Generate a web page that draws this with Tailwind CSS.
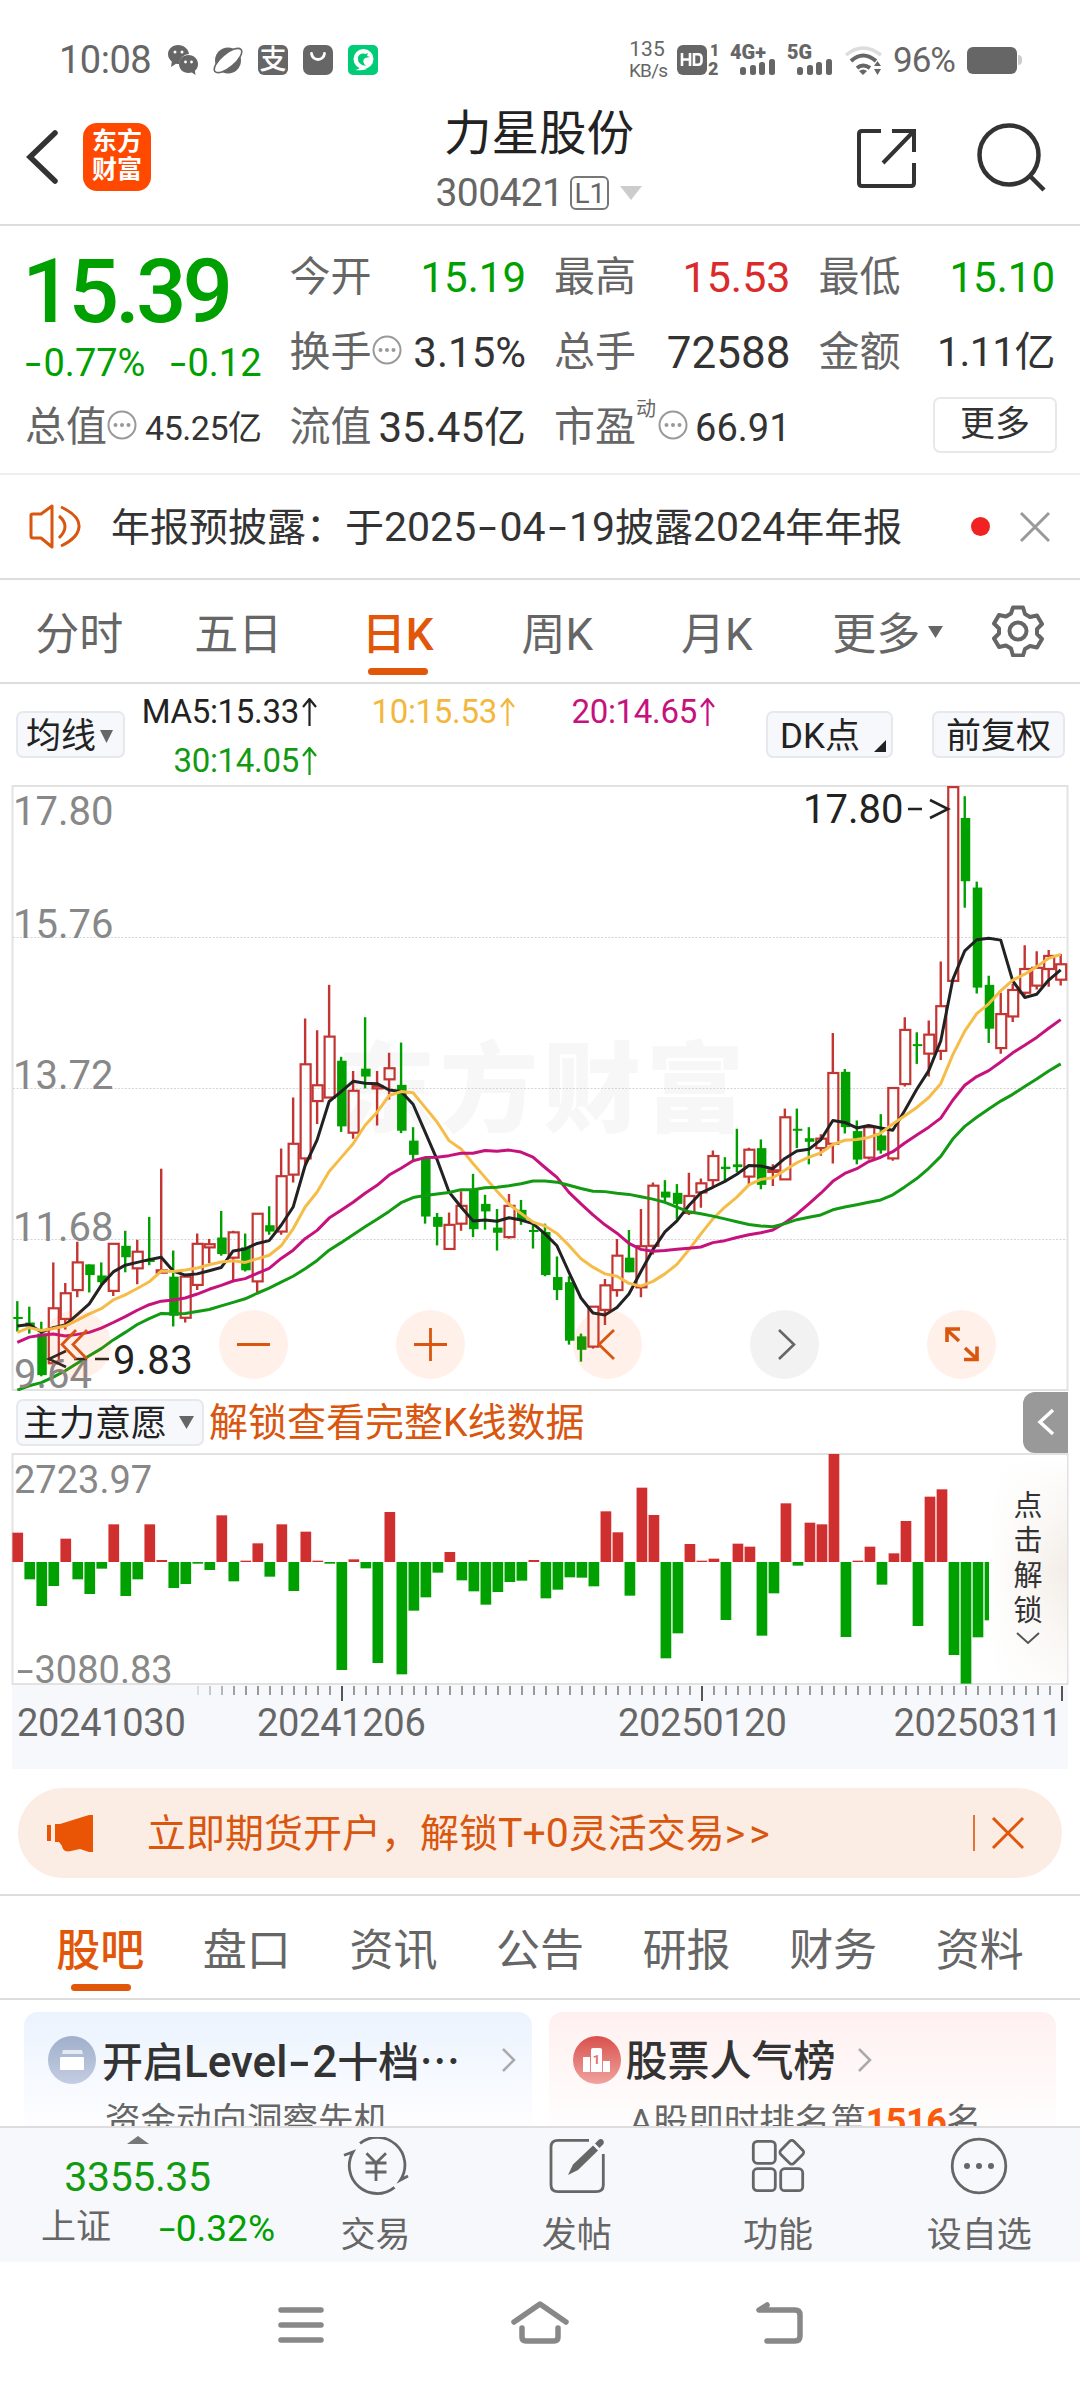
<!DOCTYPE html>
<html lang="zh-CN">
<head>
  <meta charset="UTF-8" />
  <meta name="viewport" content="width=device-width, initial-scale=1.0" />
  <title>力星股份 300421</title>
  <script src="https://cdn.jsdelivr.net/npm/@tailwindcss/browser@4"></script>
</head>
<body class="bg-white text-[#333] font-[Roboto,'Noto_Sans_CJK_SC',sans-serif] leading-none">
<div class="w-[1080px] h-[2388px] flex flex-col overflow-hidden whitespace-nowrap">

  <!-- Status bar -->
  <div class="h-[100px] pt-5 pl-[59px] pr-[57px] flex items-center justify-between text-[#666] shrink-0">
    <div class="flex items-center gap-[15px]">
      <span class="text-[38px] w-[94px] tracking-[-0.5px]">10:08</span>
      <svg class="w-[30px] h-[30px]" viewBox="0 0 30 30" fill="#666">
        <path d="M10 0C4.500 0 0 4 0 9.200c0 3 1.500 5.500 3.800 7.200L3 22l5-3.200c1 .2 2 .3 3 .2A10.500 10.500 0 0 1 21 9C20.500 4 16 0 10 0z"/>
        <path d="M20.500 10C15 10 11 14 11 19s4 9 9.500 9c1.200 0 2.300-.2 3.300-.5l3.700 2.500-.6-4.200c2-1.500 3.100-4 3.100-6.800 0-5-4-9-9.500-9z"/>
        <g fill="#fff"><circle cx="7" cy="7" r="1.500"/><circle cx="14" cy="7" r="1.500"/><circle cx="17.500" cy="17" r="1.400"/><circle cx="23.500" cy="17" r="1.400"/></g>
      </svg>
      <svg class="w-[30px] h-[30px]" viewBox="0 0 30 30">
        <circle cx="15" cy="15.500" r="13" fill="#666"/>
        <ellipse cx="15" cy="15.500" rx="17" ry="6.800" fill="#fff" stroke="#666" stroke-width="1.600" transform="rotate(-40 15 15.500)"/>
      </svg>
      <div class="size-[30px] rounded-[6px] bg-[#666] text-white text-[27px] font-medium flex items-center justify-center">支</div>
      <svg class="w-[30px] h-[30px]" viewBox="0 0 30 30"><rect width="30" height="30" rx="7" fill="#666"/><path d="M8.500 8.500c1 8 12 8 13 0" fill="none" stroke="#fff" stroke-width="2.800" stroke-linecap="round"/></svg>
      <svg class="w-[30px] h-[30px]" viewBox="0 0 30 30"><rect width="30" height="30" rx="5" fill="#0c7"/><circle cx="15.500" cy="14" r="10" fill="#fff"/><path d="M7 25q5-1 6-4l6 3q-5 2-12 1z" fill="#fff"/><path d="M10 12q2-5 8-3l2-1-1 3 3 1-5 1q-4 3 1 8-9-1-8-9z" fill="#0c7"/></svg>
    </div>
    <div class="flex items-center">
      <div class="text-center text-[21px] leading-[22px] w-[36px]"><div>135</div><div class="text-[19px] tracking-[-0.8px]">KB/s</div></div>
      <svg class="w-[206px] h-[34px] ml-[11px] overflow-visible" viewBox="0 0 206 34">
        <rect x="1" y="2" width="30" height="30" rx="6" fill="#666"/>
        <path d="M6 10v13M14 10v13M6 16.500h8M18 11.200h4q3.500 0 3.500 3.500v3.500q0 3.500-3.500 3.500h-4z" fill="none" stroke="#fff" stroke-width="2.600"/>
        <g fill="#666" font-family="Roboto" font-weight="900">
          <text x="34" y="13" font-size="16">1</text><text x="32" y="32" font-size="18">2</text>
          <text x="54" y="16" font-size="20" textLength="36" lengthAdjust="spacingAndGlyphs">4G+</text>
          <text x="111" y="16" font-size="20" textLength="25" lengthAdjust="spacingAndGlyphs">5G</text>
        </g>
        <g fill="#666">
          <rect x="64" y="24" width="6" height="8" rx="2.500"/><rect x="74" y="22" width="6" height="10" rx="2.500"/><rect x="83" y="19" width="6" height="13" rx="2.500"/><rect x="93" y="16" width="6" height="16" rx="2.500"/>
          <rect x="121" y="24" width="6" height="8" rx="2.500"/><rect x="131" y="22" width="6" height="10" rx="2.500"/><rect x="140" y="19" width="6" height="13" rx="2.500"/><rect x="150" y="16" width="6" height="16" rx="2.500"/>
        </g>
        <g fill="none" stroke="#666" stroke-width="4">
          <path d="M170 12Q187-2 205 12" stroke="#ddd" stroke-width="3.500"/>
          <path d="M175 18Q187 7 200 18M181 25Q187 20 194 25"/>
        </g>
        <path d="M183 28q4.500-3 8 0l-4 4zM198 23l3.500-5 3.500 5zM198 26l3.500 6 3.500-6z" fill="#666"/>
      </svg>
      <span class="text-[35px] w-[62px] ml-[11px] tracking-[-1px]">96%</span>
      <div class="w-[50px] h-[27px] bg-[#666] rounded-[6px] ml-[12px] mr-px"></div>
      <div class="w-[4px] h-[10px] bg-[#ccc] rounded-r mr-px"></div>
    </div>
  </div>

  <!-- Title bar -->
  <div class="h-[126px] border-b-2 border-[#ddd] flex items-center justify-between pl-[26px] pr-[32px] relative shrink-0">
    <div class="flex items-center gap-[24px] -mt-[10px]">
      <svg class="w-[33px] h-[56px]" viewBox="0 0 33 56" fill="none" stroke="#333" stroke-width="5.500" stroke-linecap="round"><path d="M29 4L4 28l25 24"/></svg>
      <div class="size-[68px] rounded-[14px] bg-[#ff4800] text-white text-[25px] leading-[28px] font-bold text-center pt-[5px]">东方<br>财富</div>
    </div>
    <div class="absolute left-[339px] w-[400px] top-[11px] text-center">
      <div class="text-[47.500px] text-[#222]">力星股份</div>
      <div class="flex items-center justify-center mt-[15px] text-[39px] text-[#666]">
        <span class="tracking-[-0.6px]">300421</span>
        <span class="border-2 border-[#777] rounded-[6px] text-[28px] w-[39px] h-[34px] leading-[31px] ml-[7px]">L1</span>
        <svg class="w-[22px] h-[14px] ml-[11px]" viewBox="0 0 22 14"><path d="M0 0h22L11 14z" fill="#ccc"/></svg>
      </div>
    </div>
    <div class="flex items-center gap-[60px] -mt-[8px]">
      <svg class="w-[60px] h-[60px]" viewBox="0 0 60 60" fill="none" stroke="#333" stroke-width="4"><path d="M25 3H6Q3 3 3 6v49q0 3 3 3h49q3 0 3-3V35M36 3h22v21M58 3L27 35"/></svg>
      <svg class="w-[72px] h-[70px]" viewBox="0 0 72 70" fill="none" stroke="#333" stroke-width="4.500"><circle cx="33" cy="32" r="29.500"/><path d="M53 52l15 15"/></svg>
    </div>
  </div>

  <!-- Quote -->
  <div class="h-[249px] border-b-2 border-[#eee] px-[25px] pt-[14px] grid grid-cols-4 gap-x-[28px] grid-rows-[75px_75px_75px] text-[41px] shrink-0">
    <div class="row-span-2 text-[#00a000]">
      <div class="text-[89px] font-medium tracking-[-4px] mt-[10px] leading-[84px] -ml-[3px]">15.39</div>
      <div class="flex justify-between text-[38px] mt-[10px]"><span><span class="inline-block scale-x-150 ml-[3px] mr-[5px]">-</span>0.77%</span><span><span class="inline-block scale-x-150 mr-[4px]">-</span>0.12</span></div>
    </div>
    <div class="flex items-center justify-between"><span class="text-[#666]">今开</span><span class="text-[#00a000] text-[42px]">15.19</span></div>
    <div class="flex items-center justify-between"><span class="text-[#666]">最高</span><span class="text-[#d92b2b] text-[43px]">15.53</span></div>
    <div class="flex items-center justify-between"><span class="text-[#666]">最低</span><span class="text-[#00a000] text-[42px]">15.10</span></div>

    <div class="flex items-center">
      <span class="text-[#666]">换手</span>
      <svg class="w-[30px] h-[30px] mb-[6px]" viewBox="0 0 30 30"><circle cx="15" cy="15" r="13.500" fill="none" stroke="#999" stroke-width="2"/><g fill="#999"><circle cx="8.500" cy="15" r="2"/><circle cx="15" cy="15" r="2"/><circle cx="21.500" cy="15" r="2"/></g></svg>
      <span class="ml-auto text-[42px]">3.15%</span>
    </div>
    <div class="flex items-center justify-between"><span class="text-[#666]">总手</span><span class="text-[44px]">72588</span></div>
    <div class="flex items-center justify-between"><span class="text-[#666]">金额</span><span class="tracking-[-0.6px]">1.11亿</span></div>

    <div class="flex items-center">
      <span class="text-[#666]">总值</span>
      <svg class="w-[30px] h-[30px] mb-[6px]" viewBox="0 0 30 30"><circle cx="15" cy="15" r="13.500" fill="none" stroke="#999" stroke-width="2"/><g fill="#999"><circle cx="8.500" cy="15" r="2"/><circle cx="15" cy="15" r="2"/><circle cx="21.500" cy="15" r="2"/></g></svg>
      <span class="ml-auto text-[34px] tracking-[-0.5px]">45.25亿</span>
    </div>
    <div class="flex items-center justify-between"><span class="text-[#666]">流值</span><span class="text-[42px]">35.45亿</span></div>
    <div class="flex items-center">
      <span class="text-[#666]">市盈</span><span class="text-[20px] text-[#666] self-start mt-[9px]">动</span>
      <svg class="w-[30px] h-[30px] mb-[6px] ml-[2px]" viewBox="0 0 30 30"><circle cx="15" cy="15" r="13.500" fill="none" stroke="#999" stroke-width="2"/><g fill="#999"><circle cx="8.500" cy="15" r="2"/><circle cx="15" cy="15" r="2"/><circle cx="21.500" cy="15" r="2"/></g></svg>
      <span class="ml-auto text-[38px]">66.91</span>
    </div>
    <div class="flex items-center justify-end"><span class="w-[124px] h-[56px] border-2 border-[#e8e8e8] rounded-[7px] text-[35px] flex items-center justify-center -mr-[2px] -mt-[6px]">更多</span></div>
  </div>

  <!-- Announcement -->
  <div class="h-[105px] border-b-2 border-[#ddd] flex items-center pl-[28px] pr-[29px] shrink-0">
    <svg class="w-[54px] h-[46px]" viewBox="0 0 54 46" fill="none" stroke="#d9560f" stroke-width="3"><path d="M3 11q0-1 2-1h8L24 2v41L13 34H5q-2 0-2-2z" stroke-linejoin="round"/><path d="M31 12q12 10 0 22M33 3q19 9 18 20t-18 19"/></svg>
    <span class="text-[39px] ml-[29px] pt-[2px]">年报预披露：于<span class="text-[41px]">2025<span class="inline-block scale-x-160 mx-[6px]">-</span>04<span class="inline-block scale-x-160 mx-[6px]">-</span>19</span>披露<span class="text-[41px]">2024</span>年年报</span>
    <span class="size-[19px] rounded-full bg-[#f02222] ml-auto"></span>
    <svg class="w-[32px] h-[32px] ml-[29px]" viewBox="0 0 32 32" stroke="#999" stroke-width="3"><path d="M2 2l28 28M30 2L2 30"/></svg>
  </div>

  <!-- Period tabs -->
  <div class="h-[104px] border-b-2 border-[#ddd] flex items-center text-[44px] text-[#666] shrink-0">
    <div class="w-[158.5px] text-center pt-[7px]">分时</div>
    <div class="w-[159.5px] text-center pt-[7px]">五日</div>
    <div class="w-[159.5px] h-full flex items-center justify-center relative text-[#e2560a] font-medium pt-[7px]">日K<div class="absolute left-[50px] bottom-[7px] w-[60px] h-[7px] rounded-full bg-[#e2560a]"></div></div>
    <div class="w-[159.5px] text-center pt-[7px]">周K</div>
    <div class="w-[159.5px] text-center pt-[7px]">月K</div>
    <div class="w-[159.5px] flex items-center justify-center relative pt-[7px]">更多<svg class="absolute left-[131px] top-[20px] w-[15px] h-[12px]" viewBox="0 0 15 12"><path d="M0 0h15L7.500 12z" fill="#666"/></svg></div>
    <svg class="w-[52px] h-[52px] mx-auto" viewBox="0 0 52 52" fill="none" stroke="#666" stroke-width="4" stroke-linejoin="round"><path d="M21 2.500h10l2 6.500 5 3 7-1.500 5 8.500-5 5v5l5 5-5 8.500-7-1.500-5 3-2 6.500H21L19 43.500l-5-3-7 1.500-5-8.500 5-5v-5l-5-5 5-8.500 7 1.500 5-3z"/><circle cx="26" cy="26" r="8.500"/></svg>
  </div>

  <!-- Moving averages -->
  <div class="h-[101px] flex pl-[16px] pr-[15px] text-[35px] text-[#222] shrink-0">
    <div class="w-[109px] h-[47px] mt-[27px] border-2 border-[#e6e8ee] bg-[#f7f8fb] rounded-[7px] flex items-center pl-[8px] pt-[3px]">均线<svg class="w-[13px] h-[13px] ml-[4px]" viewBox="0 0 13 13"><path d="M0 0h13L6.500 13z" fill="#666"/></svg></div>
    <div class="grid grid-cols-[192px_198px_200px] text-right text-[33px] leading-[49px] h-[98px] mt-[3px] tracking-[-0.3px]">
      <span>MA5:15.33<span class="ml-[3px] inline-block w-[15px] h-[28px] align-[-3px]"><svg viewBox="0 0 15 28" fill="none" stroke="#222" stroke-width="2.200"><path d="M7.500 28V1M1 9l6.500-8L14 9"/></svg></span></span>
      <span class="text-[#f3b73e]">10:15.53<span class="ml-[3px] inline-block w-[15px] h-[28px] align-[-3px]"><svg viewBox="0 0 15 28" fill="none" stroke="#f3b73e" stroke-width="2.200"><path d="M7.500 28V1M1 9l6.500-8L14 9"/></svg></span></span>
      <span class="text-[#c5127d]">20:14.65<span class="ml-[3px] inline-block w-[15px] h-[28px] align-[-3px]"><svg viewBox="0 0 15 28" fill="none" stroke="#c5127d" stroke-width="2.200"><path d="M7.500 28V1M1 9l6.500-8L14 9"/></svg></span></span>
      <span class="text-[#129a12]">30:14.05<span class="ml-[3px] inline-block w-[15px] h-[28px] align-[-3px]"><svg viewBox="0 0 15 28" fill="none" stroke="#129a12" stroke-width="2.200"><path d="M7.500 28V1M1 9l6.500-8L14 9"/></svg></span></span>
    </div>
    <div class="w-[127px] h-[47px] mt-[27px] ml-auto border-2 border-[#e6e8ee] bg-[#f7f8fb] rounded-[7px] flex items-center pl-[12px] pt-[3px] relative">DK点<svg class="absolute right-[5px] bottom-[4px] w-[12px] h-[12px]" viewBox="0 0 12 12"><path d="M12 0v12H0z" fill="#222"/></svg></div>
    <div class="w-[133px] h-[47px] mt-[27px] ml-[39px] border-2 border-[#e6e8ee] bg-[#f7f8fb] rounded-[7px] flex items-center justify-center pt-[3px]">前复权</div>
  </div>

  <!-- Candles -->
  <div class="relative h-[606px] shrink-0 text-[40px]">
    <div class="absolute left-[337px] top-[257px] text-[98px] tracking-[5px] font-black text-[#f7f7f7]">东方财富</div>
    <svg id="kline" class="absolute inset-0" width="1080" height="606" viewBox="0 0 1080 606" fill="none">
      <rect x="12.500" y="1" width="1055" height="604" stroke="#e2e2e2" stroke-width="2"/>
      <path d="M13 152.500h1054M13 303.500h1054M13 454.500h1054" stroke="#d5d5d5" stroke-dasharray="2 1.500"/>
    </svg>
    <div class="absolute left-[13px] top-[7px] text-[#888]">17.80</div>
    <div class="absolute left-[13px] top-[120px] text-[#888]">15.76</div>
    <div class="absolute left-[13px] top-[271px] text-[#888]">13.72</div>
    <div class="absolute left-[13px] top-[423px] text-[#888]">11.68</div>
    <div class="absolute left-[14px] top-[570px] text-[#888]">9.64</div>
    <div class="absolute left-[113px] top-[556px] text-[#222] tracking-[0.6px]">9.83</div>
    <div class="absolute left-[803px] top-[5px] text-[#222]">17.80</div>
    <svg class="absolute inset-0" width="1080" height="606" viewBox="0 0 1080 606" fill="none" stroke="#222" stroke-width="2.600">
      <path d="M908 24h14M930 15l18 9-18 9M66 566l-17 8 17 8M74 574h13M95 574h14"/>
      <g fill="#ff5c1a" fill-opacity=".09" stroke="none"><circle cx="76.500" cy="559.500" r="34.500"/><circle cx="253.500" cy="559.500" r="34.500"/><circle cx="430.500" cy="559.500" r="34.500"/><circle cx="607.500" cy="559.500" r="34.500"/><circle cx="961.500" cy="559.500" r="34.500"/></g>
      <circle cx="784.500" cy="559.500" r="34.500" fill="#f2f2f2" stroke="none"/>
      <g stroke="#d9560f" stroke-width="2.800"><path d="M76 545l-14 14.500 14 14.500M87 545l-14 14.500 14 14.500M237 559.500h33M414 559.500h33M430.500 543v33M614 545l-15 14.500 15 14.500"/><path d="M947 557v-13h13M946 544l13 12M965 563l13 12M964 574.500h13v-13" stroke-width="3.600"/></g>
      <path d="M779 545l15 14.500-15 14.500" stroke="#666"/>
    </svg>
  </div>

  <!-- Indicator header -->
  <div class="h-[62px] flex items-center pl-[16px] pr-[12px] shrink-0">
    <div class="w-[188px] h-[47px] border-2 border-[#e6e8ee] bg-[#f7f8fb] rounded-[7px] flex items-center pl-[5px] pt-[3px] text-[36px] text-[#222]">主力意愿<svg class="w-[15px] h-[13px] ml-[12px] mb-[3px]" viewBox="0 0 15 13"><path d="M0 0h15L7.500 13z" fill="#666"/></svg></div>
    <span class="text-[39px] text-[#d9560f] ml-[5px] pt-[3px]">解锁查看完整K线数据</span>
    <div class="ml-auto w-[45px] h-[61px] bg-[#999] rounded-l-[12px] flex items-center justify-center"><svg class="w-[18px] h-[28px]" viewBox="0 0 18 28" fill="none" stroke="#fff" stroke-width="3.500"><path d="M16 2L3 14l13 12"/></svg></div>
  </div>

  <!-- Fund flow bars -->
  <div class="relative h-[232px] shrink-0 text-[38px] text-[#888]">
    <svg id="flow" class="absolute inset-0" width="1080" height="232" viewBox="0 0 1080 232"><rect x="12.500" y="1" width="1055" height="230" fill="none" stroke="#e2e2e2" stroke-width="2"/></svg>
    <div class="absolute left-[14px] top-[8px]">2723.97</div>
    <div class="absolute left-[20px] top-[198px]"><span class="inline-block scale-x-160 mr-[4px]">-</span>3080.83</div>
    <div class="absolute left-[989px] top-[3px] w-[78px] h-[226px] bg-linear-to-r from-white to-[#f3ede7]"></div>
    <div class="absolute left-[989px] top-[3px] w-[78px] h-[226px] bg-linear-to-b from-white via-white/0 via-50% to-white/80 text-[#333] text-[29px] leading-[35px] text-center pt-[33px]">点<br>击<br>解<br>锁
      <svg class="w-[24px] h-[13px] mx-auto mt-[3px]" viewBox="0 0 24 13" fill="none" stroke="#555" stroke-width="2"><path d="M1 1l11 10L23 1"/></svg>
    </div>
  </div>

  <!-- Date axis -->
  <div class="relative h-[84px] mx-[12px] bg-[#f7f8fb] shrink-0 text-[38px] text-[#666] tracking-[-0.3px]">
    <svg id="ticks" class="absolute left-0 top-0" width="1056" height="17" viewBox="12 0 1056 17" stroke="#999" stroke-width="2"></svg>
    <div class="grid grid-cols-[240px_361px_1fr_auto] pt-[19px] pl-[5px] pr-[6px]"><span>20241030</span><span>20241206</span><span>20250120</span><span>20250311</span></div>
  </div>

  <!-- Promo banner -->
  <div class="mt-[19px] mx-[18px] h-[90px] rounded-full bg-[#fcede4] flex items-center pl-[29px] pr-[37px] text-[39px] text-[#d9560f] shrink-0">
    <svg class="w-[48px] h-[40px]" viewBox="0 0 48 40" fill="#e95504"><path d="M0 12h4v16H0zM8 11h5L42 2h4v37h-4l-9-3-9 2q-8 2-9-5l-3-4H8z"/></svg>
    <span class="ml-[52px]">立即期货开户，解锁<span class="text-[41px]">T+0</span>灵活交易<span class="tracking-[4px]">&gt;&gt;</span></span>
    <span class="w-[2px] h-[36px] bg-[#d9560f]/80 ml-auto"></span>
    <svg class="w-[34px] h-[34px] ml-[16px]" viewBox="0 0 34 34" stroke="#e2560a" stroke-width="3"><path d="M2 2l30 30M32 2L2 32"/></svg>
  </div>

  <!-- Section tabs -->
  <div class="mt-[16px] h-[106px] border-y-2 border-[#ddd] px-[27px] grid grid-cols-7 items-center text-center text-[44px] text-[#666] shrink-0">
    <div class="h-full flex items-center justify-center relative text-[#e2560a] font-medium pt-[7px]">股吧<div class="absolute left-[44px] bottom-[7px] w-[60px] h-[7px] rounded-full bg-[#e2560a]"></div></div>
    <div class="pt-[7px]">盘口</div><div class="pt-[7px]">资讯</div><div class="pt-[7px]">公告</div><div class="pt-[7px]">研报</div><div class="pt-[7px]">财务</div><div class="pt-[7px]">资料</div>
  </div>

  <!-- Cards, cut off by the bottom bar -->
  <div class="h-[126px] pt-[12px] px-[24px] grid grid-cols-2 gap-x-[17px] overflow-hidden shrink-0">
    <div class="h-[180px] rounded-[14px] bg-linear-to-b from-[#ebf3fe] to-[#fdfdff] to-60% pt-[24px] pl-[24px] pr-[16px]">
      <div class="flex items-center text-[41px] font-medium">
        <svg class="w-[48px] h-[48px]" viewBox="0 0 48 48"><defs><linearGradient id="blue" x2="0" y2="1"><stop stop-color="#a0afcb"/><stop offset="1" stop-color="#c3cde2"/></linearGradient></defs><circle cx="24" cy="24" r="24" fill="url(#blue)"/><path d="M15 14h19l1 4H14z" fill="#e3e8f2"/><rect x="12" y="21" width="24" height="13" rx="1" fill="#fff"/></svg>
        <span class="ml-[6px] mt-[3px]">开启<span class="text-[44px]">Level<span class="inline-block scale-x-150 mx-[5px]">-</span>2</span>十档<span class="font-['Noto_Sans_CJK_SC']">…</span></span>
        <svg class="w-[14px] h-[24px] ml-auto" viewBox="0 0 14 24" fill="none" stroke="#aaa" stroke-width="2.500"><path d="M1 1l11 11L1 23"/></svg>
      </div>
      <div class="text-[35.500px] text-[#666] mt-[20px] ml-[57px]">资金动向洞察先机</div>
    </div>
    <div class="h-[180px] rounded-[14px] bg-linear-to-b from-[#fff0f0] to-[#fffdfd] to-60% pt-[24px] pl-[24px]">
      <div class="flex items-center text-[42px] font-medium">
        <svg class="w-[48px] h-[48px]" viewBox="0 0 48 48"><defs><linearGradient id="red" x2="0" y2="1"><stop stop-color="#d9504d"/><stop offset="1" stop-color="#f0a39e"/></linearGradient></defs><circle cx="24" cy="24" r="24" fill="url(#red)"/><path d="M10 21h7v15h-7zM30 25h7v11h-7zM18 14q0-2 2-2h7q2 0 2 2v22H18z" fill="#fff"/><text x="23.500" y="28" text-anchor="middle" font-family="Roboto" font-weight="700" font-size="13" fill="#e2716d">1</text></svg>
        <span class="ml-[5px] mt-[3px]">股票人气榜</span>
        <svg class="w-[14px] h-[24px] ml-[22px]" viewBox="0 0 14 24" fill="none" stroke="#aaa" stroke-width="2.500"><path d="M1 1l11 11L1 23"/></svg>
      </div>
      <div class="text-[35.500px] text-[#666] mt-[20px] ml-[57px]">A股即时排名第<b class="text-[#f95a0c] text-[36px] tracking-[-0.5px]">1516</b>名</div>
    </div>
  </div>

  <!-- Bottom bar -->
  <div class="h-[136px] border-t-2 border-[#ddd] bg-[#f7f8fb] flex text-[35px] text-[#666] shrink-0">
    <div class="w-[275px] pt-[8px]">
      <svg class="w-[22px] h-[8px] ml-[127px]" viewBox="0 0 22 8"><path d="M0 8L11 0l11 8z" fill="#777"/></svg>
      <div class="text-[41px] text-[#129a12] text-center mt-[13px] tracking-[-0.4px]">3355.35</div>
      <div class="flex justify-between pl-[41px] mt-[12px] text-[35px]"><span>上证</span><span class="text-[#00a000] text-[37px]"><span class="inline-block scale-x-160 mr-[4px]">-</span>0.32%</span></div>
    </div>
    <div class="flex-1 grid grid-cols-4 text-center pt-[9px]">
      <div class="flex flex-col items-center gap-[21px]">
        <svg class="w-[66px] h-[60px]" viewBox="0 0 66 60" fill="none" stroke="#666" stroke-width="2.800"><path d="M17 6.300A27.700 27.700 0 0 1 57.500 43L65 39M51.500 50.300A27.700 27.700 0 0 1 10 15L1 18.300M23.500 16.300L33 26l10-9.700M33 26v18M22.500 26h21M22.500 35h21"/></svg>
        交易
      </div>
      <div class="flex flex-col items-center gap-[21px]">
        <svg class="w-[58px] h-[60px]" viewBox="0 0 58 60" fill="none" stroke="#666" stroke-width="2.800"><path d="M41 3.300H10Q3 3.300 3 10v38q0 6.700 7 6.700h38q7.300 0 7.300-6.700V17"/><path d="M20 38l5-10.500L45 8.500l5 5L30 33z" fill="#666" stroke="none"/><path d="M47 6.500l4-4q2.500-1 4 .5t.5 4l-4 4z" fill="#666" stroke="none"/></svg>
        发帖
      </div>
      <div class="flex flex-col items-center gap-[21px]">
        <svg class="w-[54px] h-[60px]" viewBox="0 0 54 60" fill="none" stroke="#666" stroke-width="2.800"><rect x="2.300" y="4.300" width="22" height="22" rx="4"/><rect x="2.300" y="31.700" width="22" height="22" rx="4"/><rect x="29.700" y="31.700" width="22" height="22" rx="4"/><rect x="31.500" y="6" width="18.500" height="18.500" rx="3" transform="rotate(45 40.700 15.300)"/></svg>
        功能
      </div>
      <div class="flex flex-col items-center gap-[21px]">
        <svg class="w-[60px] h-[60px]" viewBox="0 0 60 60" fill="none" stroke="#666" stroke-width="2.800"><circle cx="30" cy="29" r="26.800"/><g fill="#666" stroke="none"><circle cx="18" cy="29" r="3"/><circle cx="30" cy="29" r="3"/><circle cx="42" cy="29" r="3"/></g></svg>
        设自选
      </div>
    </div>
  </div>

  <!-- System navigation -->
  <div class="flex-1 flex justify-center gap-[184px] pt-[37px]">
    <svg class="w-[50px] h-[48px]" viewBox="0 0 50 48" stroke="#888" stroke-width="5.500" stroke-linecap="round"><path d="M5 11h40M5 26h40M5 41h40"/></svg>
    <svg class="w-[60px] h-[48px]" viewBox="0 0 60 48" fill="none" stroke="#888" stroke-width="5.500" stroke-linecap="round" stroke-linejoin="round"><path d="M4 23L30 5l26 18M12 29v9q0 4 4 4h28q4 0 4-4v-9"/></svg>
    <svg class="w-[50px] h-[48px]" viewBox="0 0 50 48" fill="none" stroke="#888" stroke-width="5.500" stroke-linecap="round" stroke-linejoin="round"><path d="M13 6L5 11h36q5 0 5 5v21q0 5-5 5H13"/></svg>
  </div>
</div>

<script>
  // high, body top, body bottom, low (chart units), 1 = up
  const candles = [
    [1318,1358,1362,1395,0],[1332,1372,1382,1400,0],[1370,1400,1505,1508,0],[1220,1336,1475,1475,1],[1272,1298,1363,1390,1],[1168,1220,1290,1308,1],
    [1225,1225,1252,1296,0],[1220,1253,1270,1280,0],[1172,1173,1292,1305,1],[1140,1178,1207,1245,0],[1163,1193,1235,1275,1],[1105,1214,1219,1227,0],
    [983,1240,1246,1246,1],[1190,1256,1355,1382,0],[1253,1256,1360,1372,1],[1147,1173,1277,1290,1],[1161,1174,1182,1222,1],[1090,1157,1199,1203,0],
    [1140,1144,1208,1268,1],[1147,1182,1240,1243,0],[1097,1097,1268,1295,1],[1078,1126,1142,1150,0],[932,1002,1142,1150,1],[803,920,998,1018,1],
    [603,719,957,975,1],[633,772,812,870,1],[518,649,803,803,1],[700,710,876,890,0],[736,786,892,907,1],[600,730,750,780,0],
    [736,774,780,874,1],[690,729,757,808,1],[664,771,887,893,0],[878,912,948,965,0],[955,957,1104,1122,0],[1095,1105,1130,1177,0],
    [1094,1125,1186,1186,1],[1040,1077,1122,1140,1],[996,1035,1136,1156,0],[1049,1072,1091,1137,0],[1085,1132,1145,1190,0],[1047,1077,1156,1160,1],
    [1062,1087,1113,1125,0],[1120,1138,1143,1185,0],[1122,1143,1252,1255,0],[1205,1257,1290,1315,0],[1255,1270,1418,1428,0],[1400,1407,1441,1471,0],
    [1332,1332,1433,1438,1],[1262,1278,1340,1378,1],[1161,1203,1290,1307,1],[1138,1208,1245,1245,0],[1085,1179,1283,1308,1],[1018,1026,1178,1200,1],
    [1012,1041,1056,1068,0],[1022,1044,1072,1110,0],[993,1052,1095,1100,1],[1008,1020,1043,1082,1],[937,951,1012,1030,1],[954,978,984,1014,0],
    [882,972,979,992,0],[930,935,1003,1022,1],[909,931,1024,1035,0],[972,987,991,1027,1],[831,853,1010,1010,1],[831,882,887,931,0],
    [878,906,915,972,0],[896,907,931,950,1],[640,741,920,970,1],[731,738,878,894,0],[861,888,960,972,0],[878,878,955,960,1],
    [845,899,937,945,0],[778,779,957,963,1],[600,632,769,775,1],[638,668,672,718,0],[608,644,692,750,1],[459,572,685,708,1],
    [16,18,508,508,1],[41,96,256,323,0],[257,272,525,540,0],[495,518,629,665,0],[538,592,678,692,1],[515,531,598,612,1],
    [418,478,538,545,1],[433,475,520,530,1],[430,445,478,523,1],[440,466,505,520,1]
  ];

  const averages = {
    '#222222': [1381,1377,1396,1385,1378,1352,1325,1278,1244,1227,1220,1213,1207,1242,1252,1249,1241,1233,1191,1186,1172,1165,1126,1080,975,910,813,788,762,767,768,784,788,820,890,960,1042,1080,1115,1113,1116,1107,1113,1122,1148,1178,1245,1310,1348,1353,1334,1300,1243,1188,1143,1115,1076,1044,1030,1015,997,975,976,983,957,938,934,910,861,866,880,874,880,886,836,782,735,660,505,432,404,400,405,508,550,542,506,480],
    '#f5bd48': [1397,1385,1392,1387,1381,1366,1350,1337,1315,1302,1286,1269,1242,1243,1239,1234,1226,1219,1216,1220,1211,1202,1178,1135,1080,1042,990,955,920,873,840,798,788,791,828,865,912,933,970,1005,1040,1073,1096,1118,1128,1147,1177,1211,1232,1249,1255,1273,1280,1268,1249,1225,1188,1148,1110,1080,1055,1024,1010,1006,987,968,954,943,922,911,909,904,893,870,849,828,803,768,695,635,591,566,533,506,491,472,451,441],
    '#c5127d': [1422,1409,1404,1401,1406,1402,1397,1386,1372,1357,1341,1327,1318,1315,1310,1300,1288,1278,1267,1261,1248,1235,1210,1189,1160,1139,1108,1088,1068,1045,1025,999,982,963,955,954,950,944,944,937,939,936,941,954,980,1005,1043,1072,1100,1125,1146,1172,1187,1192,1190,1187,1184,1181,1170,1165,1157,1150,1145,1138,1120,1098,1072,1045,1015,995,983,965,954,940,918,898,878,855,810,772,750,735,713,690,671,651,628,606],
    '#129a12': [1543,1532,1524,1510,1494,1475,1456,1438,1416,1397,1377,1362,1349,1350,1349,1344,1339,1330,1321,1312,1298,1285,1270,1255,1236,1215,1189,1170,1150,1130,1111,1091,1069,1056,1051,1047,1043,1036,1036,1031,1030,1026,1021,1014,1014,1017,1025,1033,1040,1041,1045,1048,1054,1060,1068,1080,1092,1097,1103,1110,1117,1124,1128,1130,1122,1112,1106,1100,1087,1080,1074,1068,1062,1049,1029,1008,982,952,908,876,853,832,812,795,775,756,736,718]
  };

  const x = i => 17.3 + i * 11.993;
  const y = v => v / 2.529 - 5;

  let out = '';
  candles.forEach(([high, top, bottom, low, up], i) => {
    const cx = x(i), t = y(top), h = y(bottom) - t;
    if (up) {
      out += `<path d="M${cx} ${y(high)}V${t}M${cx} ${t + h}V${y(low)}" stroke="#c33532" stroke-width="2.400"/>
              <rect x="${cx - 4.500}" y="${t}" width="10" height="${h}" stroke="#c33532" stroke-width="2.200"/>`;
    } else {
      out += `<path d="M${cx} ${y(high)}V${y(low)}" stroke="#00a000" stroke-width="2.400"/>
              <rect x="${cx - 4}" y="${t}" width="9.500" height="${Math.max(h, 2)}" fill="#00a000"/>`;
    }
  });
  for (const color in averages) {
    const points = averages[color].map((v, i) => `${x(i)},${y(v)}`).join(' ');
    out += `<polyline points="${points}" stroke="${color}" stroke-width="3" stroke-linejoin="round"/>`;
  }
  document.getElementById('kline').innerHTML += out;

  // Bar ends, zero line at 546
  const flow = [458,598,678,618,476,598,642,566,433,648,598,433,540,624,612,551,570,406,604,542,490,590,433,633,455,542,551,870,538,565,849,396,883,692,652,578,516,601,634,674,636,606,602,540,655,629,592,593,619,394,457,647,323,405,835,760,492,542,536,720,491,500,767,640,370,557,428,433,222,771,542,500,614,520,423,738,350,328,825,911,772,721];
  document.getElementById('flow').innerHTML += flow.map((v, i) => {
    const h = (v - 546) / 3;
    return `<rect x="${12.4 + i * 12.003}" y="${h < 0 ? 109 + h : 109}" width="10.700" height="${Math.abs(h)}" fill="${h < 0 ? '#d02f2f' : '#00a000'}"/>`;
  }).join('');

  let ticks = '';
  for (let i = 0; i < 73; i++) {
    const major = i % 30 === 12;
    ticks += `<path d="M${198 + i * 12} 1V${major ? 16 : 10}" ${major ? 'stroke="#555"' : ''} opacity="${Math.min(1, 0.3 + i * 0.2)}"/>`;
  }
  document.getElementById('ticks').innerHTML = ticks;
</script>
</body>
</html>
